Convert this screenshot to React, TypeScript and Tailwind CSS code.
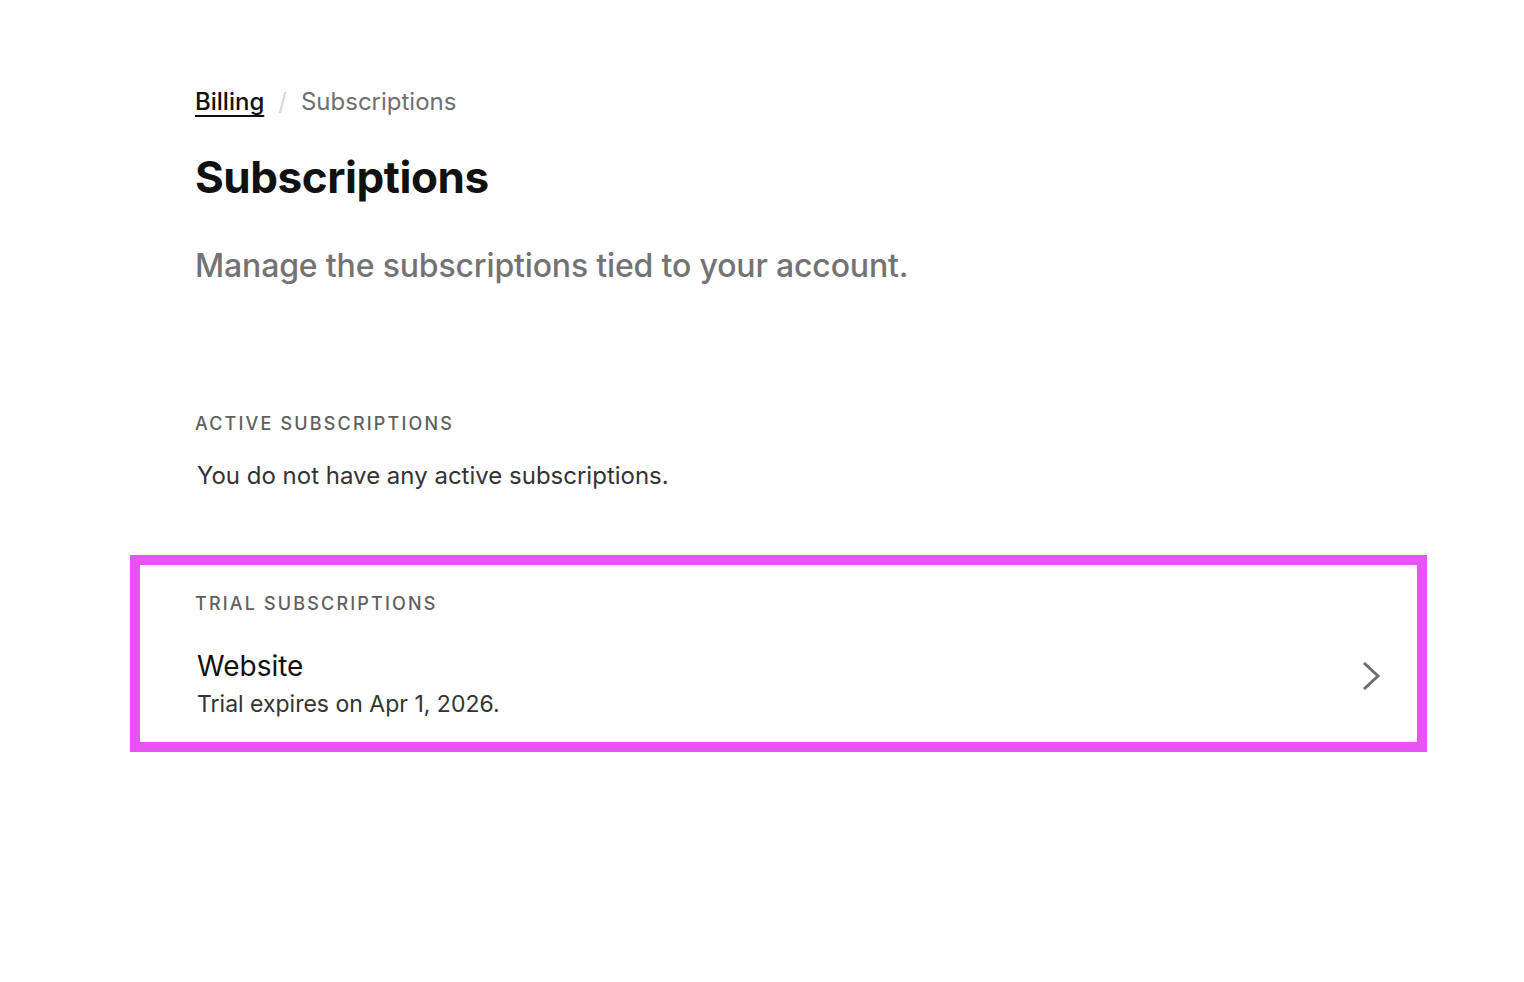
import React from 'react';

const Chevron: React.FC = () => (
  <svg width="22" height="32" viewBox="0 0 22 32" fill="none" xmlns="http://www.w3.org/2000/svg">
    <path d="M4 3l14 13L4 29" stroke="#6f6f6f" strokeWidth="3" />
  </svg>
);

export default function App() {
  return (
    <div className="min-h-screen bg-white text-[#111] font-['Inter','Noto_Sans',sans-serif]">
      <div className="ml-[130px] w-[1297px] pt-[86px]">
        {/* header */}
        <div className="px-[65px]">
          <nav className="flex items-center gap-[14px] text-[24px] leading-[32px]">
            <a href="#" className="text-[#111] font-medium underline underline-offset-[5px] decoration-[2px]">
              Billing
            </a>
            <span className="text-[#d6d6d6]">/</span>
            <span className="text-[#6f6f6f]">Subscriptions</span>
          </nav>
          <h1 className="mt-[32px] text-[44px] leading-[54px] font-bold tracking-[-0.01em]">Subscriptions</h1>
          <p className="mt-[42px] text-[32px] leading-[40px] text-[#737373] font-medium tracking-[-0.005em]">
            Manage the subscriptions tied to your account.
          </p>
        </div>

        {/* active */}
        <section className="px-[65px] mt-[125px]">
          <h2 className="text-[18px] leading-[26px] font-medium tracking-[0.12em] text-[#5f5f5f]">
            ACTIVE SUBSCRIPTIONS
          </h2>
          <p className="mt-[24px] ml-[2px] text-[24px] leading-[30px] text-[#333]">
            You do not have any active subscriptions.
          </p>
        </section>

        {/* trial */}
        <section className="mt-[64px] border-[10px] border-[#e854f4] pl-[55px] pr-[35px] pt-[26px] pb-[23px]">
          <h2 className="text-[18px] leading-[26px] font-medium tracking-[0.12em] text-[#5f5f5f]">
            TRIAL SUBSCRIPTIONS
          </h2>
          <a href="#" className="mt-[31px] flex items-center justify-between">
            <div className="ml-[2px]">
              <div className="text-[28px] leading-[36px] text-[#111]">Website</div>
              <div className="mt-[5px] text-[23px] leading-[30px] text-[#333]">Trial expires on Apr 1, 2026.</div>
            </div>
            <div className="mb-[15px]">
              <Chevron />
            </div>
          </a>
        </section>
      </div>
    </div>
  );
}
